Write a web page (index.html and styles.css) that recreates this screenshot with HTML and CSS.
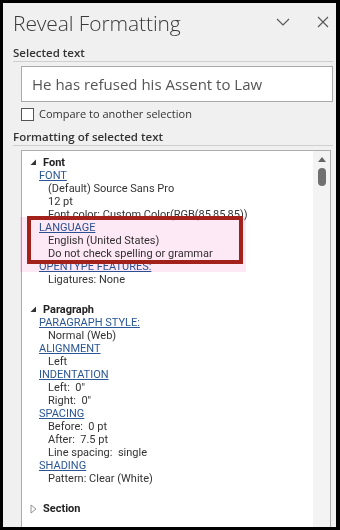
FILE: index.html
```html
<!DOCTYPE html>
<html>
<head>
<meta charset="utf-8">
<link rel="stylesheet" href="styles.css">
</head>
<body>
<div class="pane">
  <div class="header">
    <div class="title">Reveal Formatting</div>
    <div class="hicons">
      <svg class="chev" width="14" height="8" viewBox="0 0 14 8"><path d="M1 1 L7 7 L13 1" fill="none" stroke="#555" stroke-width="1.1"/></svg>
      <svg class="close" width="12" height="12" viewBox="0 0 12 12"><path d="M1 1 L11 11 M11 1 L1 11" fill="none" stroke="#555" stroke-width="1.1"/></svg>
    </div>
  </div>

  <div class="group-label">Selected text</div>
  <div class="selbox">He has refused his Assent to Law</div>
  <label class="compare"><span class="cbox"></span><span>Compare to another selection</span></label>

  <div class="group-label">Formatting of selected text</div>
  <div class="listbox">
    <div class="list">
      <div class="cat"><svg class="tri" width="7" height="7" viewBox="0 0 7 7"><path d="M6 0.5 L6 6 L0.5 6 Z" fill="#333"/></svg><span>Font</span></div>
      <div class="link">FONT</div>
      <div class="val">(Default) Source Sans Pro</div>
      <div class="val">12 pt</div>
      <div class="val">Font color: Custom Color(RGB(85,85,85))</div>
      <div class="link">LANGUAGE</div>
      <div class="val">English (United States)</div>
      <div class="val">Do not check spelling or grammar</div>
      <div class="link">OPENTYPE FEATURES:</div>
      <div class="val">Ligatures: None</div>
      <div class="blank"></div>
      <div class="cat cat-gap"><svg class="tri" width="7" height="7" viewBox="0 0 7 7"><path d="M6 0.5 L6 6 L0.5 6 Z" fill="#333"/></svg><span>Paragraph</span></div>
      <div class="link">PARAGRAPH STYLE:</div>
      <div class="val">Normal (Web)</div>
      <div class="link">ALIGNMENT</div>
      <div class="val">Left</div>
      <div class="link">INDENTATION</div>
      <div class="val">Left:&nbsp; 0"</div>
      <div class="val">Right:&nbsp; 0"</div>
      <div class="link">SPACING</div>
      <div class="val">Before:&nbsp; 0 pt</div>
      <div class="val">After:&nbsp; 7.5 pt</div>
      <div class="val">Line spacing:&nbsp; single</div>
      <div class="link">SHADING</div>
      <div class="val">Pattern: Clear (White)</div>
      <div class="blank"></div>
      <div class="cat cat-gap"><svg class="tri" width="7" height="10" viewBox="0 0 7 10"><path d="M1 1 L6 5 L1 9 Z" fill="none" stroke="#888" stroke-width="0.9"/></svg><span>Section</span></div>
    </div>
    <div class="scrollbar">
      <svg width="10" height="7" viewBox="0 0 10 7"><path d="M1 6 L5 1 L9 6 Z" fill="#666"/></svg>
      <div class="thumb"></div>
    </div>
    <div class="tint"></div>
    <div class="callout"></div>
  </div>
</div>
</body>
</html>
```

FILE: styles.css
```css
html, body {
  margin: 0;
  padding: 0;
}
body {
  width: 340px;
  height: 530px;
  box-sizing: border-box;
  border-style: solid;
  border-color: #000;
  border-width: 3px 4px 3px 3px;
  background: #f0f0f0;
  overflow: hidden;
  font-family: "Open Sans", "Noto Sans", sans-serif;
  color: #333;
}
.pane {
  display: flex;
  flex-direction: column;
  padding: 0 3px 0 10px;
  height: 100%;
}
.header {
  display: flex;
  align-items: center;
  justify-content: space-between;
  height: 38px;
  padding-top: 1px;
}
.title {
  font-size: 21px;
  font-weight: 300;
  color: #3a3a3a;
  letter-spacing: -0.1px;
}
.hicons {
  display: flex;
  align-items: center;
  gap: 27px;
  padding-right: 4px;
  margin-top: -2px;
}
.group-label {
  font-size: 11.5px;
  font-weight: 600;
  color: #333;
  line-height: 15px;
  padding-top: 3px;
  padding-bottom: 1px;
  border-bottom: 1px solid #cfcfcf;
  margin-bottom: 4px;
}
.selbox {
  margin-left: 8px;
  height: 34px;
  border: 1px solid #aaa;
  background: #fff;
  font-size: 15px;
  color: #555;
  display: flex;
  align-items: center;
  padding-left: 10px;
}
.compare {
  display: flex;
  align-items: center;
  gap: 5px;
  margin: 4px 0 4px 8px;
  font-size: 11px;
  color: #333;
  line-height: 16px;
}
.cbox {
  width: 11px;
  height: 11px;
  border: 1px solid #555;
  background: #fff;
}
.listbox {
  position: relative;
  flex: 1;
  margin-left: 8px;
  margin-right: 2px;
  border: 1px solid #adadad;
  border-bottom: none;
  background: #fff;
  display: flex;
}
.list {
  flex: 1;
  padding: 5px 0 0 8px;
  font-family: Roboto, "Liberation Sans", sans-serif;
  font-size: 11px;
  line-height: 13px;
  color: #333;
}
.cat {
  display: flex;
  align-items: center;
  gap: 6px;
  font-weight: 700;
  color: #222;
}
.cat-gap {
  margin-top: 4px;
}
.link {
  padding-left: 9px;
  color: #2b5797;
  text-decoration: underline;
}
.val {
  padding-left: 18px;
}
.blank {
  height: 13px;
}
.scrollbar {
  width: 17px;
  background: #f3f3f3;
  display: flex;
  flex-direction: column;
  align-items: center;
  padding-top: 5px;
  gap: 5px;
}
.thumb {
  width: 8px;
  height: 18px;
  border-radius: 4px;
  background: #707070;
}
.tint {
  position: absolute;
  left: -2px;
  top: 66px;
  width: 226px;
  height: 55px;
  background: #fde9f6;
  mix-blend-mode: multiply;
}
.callout {
  position: absolute;
  left: 5px;
  top: 65px;
  width: 208px;
  height: 40px;
  border: 4px solid #a2211a;
}
```
